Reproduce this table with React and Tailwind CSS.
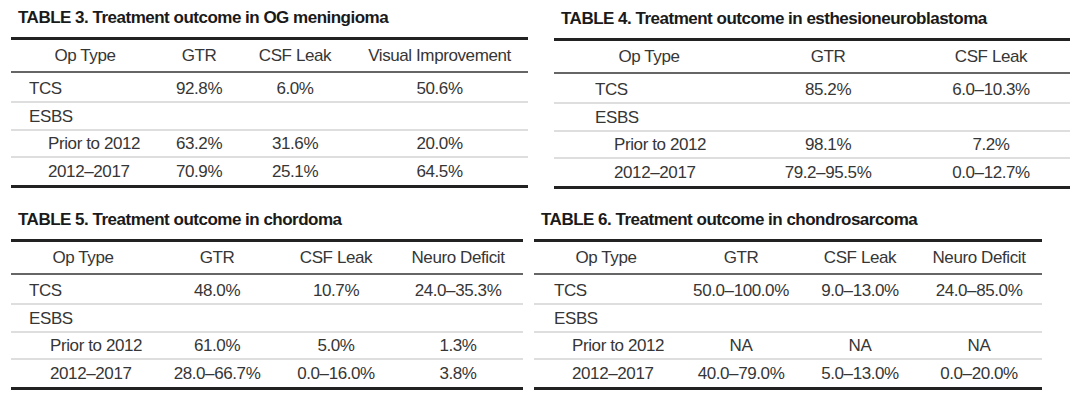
const tables = [
  {
    title: "TABLE 3. Treatment outcome in OG meningioma",
    wrap: "w-[517px] ml-[11px]",
    cols: "grid-cols-[148px_80px_112px_177px]",
    pad: ["pl-[18px]", "pl-[37px]"],
    head: ["Op Type", "GTR", "CSF Leak", "Visual Improvement"],
    rows: [
      ["TCS", "92.8%", "6.0%", "50.6%"],
      ["ESBS", "", "", ""],
      ["Prior to 2012", "63.2%", "31.6%", "20.0%"],
      ["2012–2017", "70.9%", "25.1%", "64.5%"],
    ],
  },
  {
    title: "TABLE 4. Treatment outcome in esthesioneuroblastoma",
    wrap: "w-[516px] ml-[26px] mt-[1px]",
    cols: "grid-cols-[190px_168px_158px]",
    pad: ["pl-[41px]", "pl-[60px]"],
    head: ["Op Type", "GTR", "CSF Leak"],
    rows: [
      ["TCS", "85.2%", "6.0–10.3%"],
      ["ESBS", "", ""],
      ["Prior to 2012", "98.1%", "7.2%"],
      ["2012–2017", "79.2–95.5%", "0.0–12.7%"],
    ],
  },
  {
    title: "TABLE 5. Treatment outcome in chordoma",
    wrap: "w-[512px] ml-[11px]",
    cols: "grid-cols-[144px_124px_114px_130px]",
    pad: ["pl-[18px]", "pl-[39px]"],
    head: ["Op Type", "GTR", "CSF Leak", "Neuro Deficit"],
    rows: [
      ["TCS", "48.0%", "10.7%", "24.0–35.3%"],
      ["ESBS", "", "", ""],
      ["Prior to 2012", "61.0%", "5.0%", "1.3%"],
      ["2012–2017", "28.0–66.7%", "0.0–16.0%", "3.8%"],
    ],
  },
  {
    title: "TABLE 6. Treatment outcome in chondrosarcoma",
    wrap: "w-[508px] ml-[11px]",
    cols: "grid-cols-[144px_126px_112px_126px]",
    pad: ["pl-[20px]", "pl-[38px]"],
    head: ["Op Type", "GTR", "CSF Leak", "Neuro Deficit"],
    rows: [
      ["TCS", "50.0–100.0%", "9.0–13.0%", "24.0–85.0%"],
      ["ESBS", "", "", ""],
      ["Prior to 2012", "NA", "NA", "NA"],
      ["2012–2017", "40.0–79.0%", "5.0–13.0%", "0.0–20.0%"],
    ],
  },
];

// row heights (border included) + separators, top to bottom
const rowStyle = [
  "h-[30px] pt-[3px] border-b-2 border-[#dedede]",
  "h-[28px] pt-[1px] border-b-2 border-[#dedede]",
  "h-[27px] border-b-2 border-[#dedede]",
  "h-[27px]",
];

const OutcomeTable = ({ t }) => (
  <div className={`${t.wrap} shrink-0`}>
    <div className="pl-[7px] h-[20px] mt-[8px] mb-[9px] text-[17px] leading-[20px] font-bold tracking-[-0.5px] text-[#1a1a1a] whitespace-nowrap">
      {t.title}
    </div>
    <div className="border-t-[3px] border-b-[3px] border-[#222]">
      <div className={`grid ${t.cols} h-[33px] items-center border-b-2 border-[#666]`}>
        {t.head.map((h, i) => (
          <div key={i} className="text-center whitespace-nowrap">
            {h}
          </div>
        ))}
      </div>
      {t.rows.map((r, ri) => (
        <div key={ri} className={`grid ${t.cols} items-center ${rowStyle[ri]}`}>
          {r.map((c, ci) => (
            <div
              key={ci}
              className={`whitespace-nowrap ${
                ci === 0 ? (ri < 2 ? t.pad[0] : t.pad[1]) : "text-center"
              }`}
            >
              {c}
            </div>
          ))}
        </div>
      ))}
    </div>
  </div>
);

export default function App() {
  return (
    <div className="w-[1080px] h-[403px] bg-white overflow-hidden font-['Liberation_Sans',Arial,sans-serif] text-[17px] tracking-[-0.4px] leading-none text-[#363636]">
      <div className="flex">
        <OutcomeTable t={tables[0]} />
        <OutcomeTable t={tables[1]} />
      </div>
      <div className="flex mt-[13px]">
        <OutcomeTable t={tables[2]} />
        <OutcomeTable t={tables[3]} />
      </div>
    </div>
  );
}
